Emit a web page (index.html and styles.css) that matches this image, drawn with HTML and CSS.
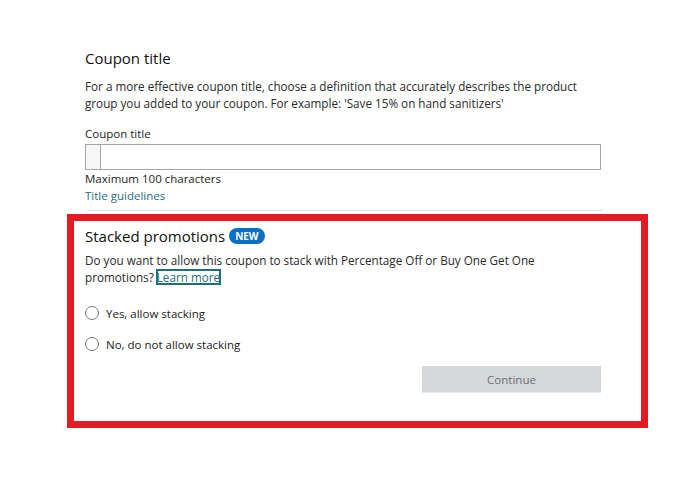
FILE: index.html
```html
<!DOCTYPE html>
<html lang="en">
<head>
    <meta charset="UTF-8">
    <meta name="viewport" content="width=device-width, initial-scale=1.0">
    <title>Coupon title</title>
    <link rel="stylesheet" href="styles.css">
</head>
<body>
    <div class="page">
        <div class="section">
            <h2>Coupon title</h2>
            <p class="hint">For a more effective coupon title, choose a definition that accurately describes the product group you added to your coupon. For example: 'Save 15% on hand sanitizers'</p>
            <label class="label" for="couponTitle">Coupon title</label>
            <div class="input">
                <span class="prefix"></span>
                <input type="text" id="couponTitle">
            </div>
            <div class="note">Maximum 100 characters</div>
            <a class="link" href="#">Title guidelines</a>
        </div>
        <div class="divider"></div>

        <div class="stacked">
            <h2>Stacked promotions <span class="badge">NEW</span></h2>
            <p class="hint">Do you want to allow this coupon to stack with Percentage Off or Buy One Get One promotions?<a class="focus-link" href="#">Learn more</a></p>
            <label class="radio"><input type="radio" name="stack"><span>Yes, allow stacking</span></label>
            <label class="radio"><input type="radio" name="stack"><span>No, do not allow stacking</span></label>
            <div class="actions">
                <button disabled>Continue</button>
            </div>
        </div>
    </div>
</body>
</html>
```

FILE: styles.css
```css
body {
    margin: 0;
    background-color: #ffffff;
    font-family: "Open Sans", Arial, sans-serif;
    color: #222;
}
.page {
    width: 700px;
    height: 478px;
    padding-top: 48px;
    box-sizing: border-box;
}
.section {
    margin-left: 85px;
    width: 516px;
}
h2 {
    font-size: 15px;
    font-weight: normal;
    margin: 0 0 10px 0;
    color: #111;
}
.hint {
    font-size: 11.7px;
    line-height: 17px;
    margin: 0 0 14px 0;
    color: #2a2a2a;
}
.label {
    display: block;
    font-size: 11.5px;
    margin-bottom: 3px;
}
.input {
    display: flex;
    height: 26px;
    border: 1px solid #a6a6a6;
    box-sizing: border-box;
}
.input .prefix {
    width: 14px;
    border-right: 1px solid #a6a6a6;
    background-color: #f6f6f6;
}
.input input {
    flex: 1;
    border: none;
    outline: none;
}
.note {
    font-size: 11.5px;
    margin-top: 0;
    line-height: 17px;
}
.link {
    display: block;
    font-size: 11.5px;
    line-height: 17px;
    color: #1f6f7a;
    text-decoration: none;
}
.divider {
    margin: 6px 0 0 87px;
    width: 515px;
    height: 1px;
    background-color: #e3e3e3;
}
.stacked {
    margin: 3px 0 0 67px;
    width: 581px;
    height: 214px;
    box-sizing: border-box;
    border: 7px solid #e31c24;
    padding: 5px 40px 0 11px;
}
.stacked h2 {
    margin-bottom: 6px;
}
.badge {
    display: inline-block;
    background-color: #0d6fc4;
    color: #fff;
    font-size: 10px;
    font-weight: bold;
    padding: 1px 6px;
    border-radius: 9px;
    vertical-align: 2px;
}
.stacked .hint {
    width: 470px;
    margin-bottom: 18px;
}
.focus-link {
    display: inline-block;
    line-height: 14px;
    color: #1f6f7a;
    text-decoration: none;
    outline: 2px solid #1f6f7a;
    outline-offset: -1px;
    margin-left: 3px;
}
.radio {
    display: flex;
    align-items: center;
    gap: 7px;
    font-size: 11.5px;
    margin-bottom: 13px;
    height: 18px;
}
.radio input {
    margin: 0;
    width: 14px;
    height: 14px;
}
.actions {
    display: flex;
    justify-content: flex-end;
    margin-top: 10px;
}
.actions button {
    width: 179px;
    height: 26px;
    border: none;
    background-color: #d6d7d9;
    color: #6b6f73;
    font-family: "Open Sans", Arial, sans-serif;
    font-size: 11.5px;
    box-shadow: 0 1px 1px rgba(0, 0, 0, 0.08);
}
```
